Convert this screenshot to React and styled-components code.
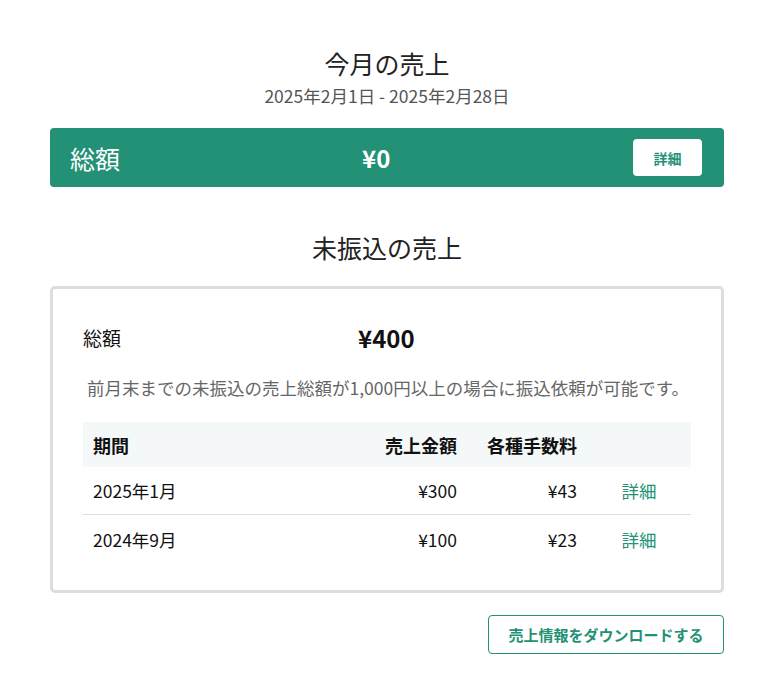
import React from "react";
import styled, { createGlobalStyle } from "styled-components";

const GlobalStyle = createGlobalStyle`
  html, body {
    margin: 0;
    padding: 0;
    background: #ffffff;
  }
  body {
    font-family: "Noto Sans CJK JP", "Noto Sans", sans-serif;
    color: #222222;
  }
`;

const GREEN = "#239175";

const Page = styled.div`
  padding: 46px 44px 20px 50px;
  display: flex;
  flex-direction: column;
`;

const SectionTitle = styled.h2`
  margin: ${(p) => p.$mt || 0}px 0 0;
  text-align: center;
  font-size: 25px;
  line-height: 34px;
  font-weight: 400;
  color: #222222;
`;

const Period = styled.div`
  margin-top: 4px;
  text-align: center;
  font-size: 17.5px;
  line-height: 24px;
  color: #555555;
`;

const TotalBar = styled.div`
  margin-top: 20px;
  height: 59px;
  box-sizing: border-box;
  background: ${GREEN};
  border-radius: 4px;
  display: flex;
  align-items: center;
  padding: 0 22px 0 20px;
  color: #ffffff;
`;

const SumLabel = styled.div`
  width: ${(p) => p.$w}px;
  flex: none;
  font-size: ${(p) => p.$size}px;
  line-height: 34px;
`;

const SumValue = styled.div`
  flex: 1;
  font-size: 24px;
  line-height: 34px;
  font-weight: 700;
`;

const WhiteButton = styled.button`
  width: 69px;
  height: 37px;
  border: none;
  border-radius: 4px;
  background: #ffffff;
  color: ${GREEN};
  font-family: inherit;
  font-size: 14px;
  font-weight: 700;
  cursor: pointer;
`;

const Card = styled.div`
  margin-top: 22px;
  border: 3px solid #dddddd;
  border-radius: 5px;
  padding: 32px 30px 27px;
  display: flex;
  flex-direction: column;
`;

const SumRow = styled.div`
  display: flex;
  align-items: center;
  color: #111111;
`;

const Note = styled.p`
  margin: 20px 0 0;
  padding-left: 4px;
  font-size: 17.5px;
  line-height: 26px;
  color: #666666;
`;

const Table = styled.div`
  margin-top: 21px;
  display: grid;
  grid-template-columns: 1fr 120px 120px 104px;
`;

const Cell = styled.div`
  height: ${(p) => (p.$head ? 45 : 48)}px;
  box-sizing: border-box;
  display: flex;
  align-items: center;
  justify-content: ${(p) =>
    p.$align === "right" ? "flex-end" : p.$align === "center" ? "center" : "flex-start"};
  padding: 0 10px;
  font-size: ${(p) => (p.$head ? 18 : 17.5)}px;
  font-weight: ${(p) => (p.$head ? 700 : 400)};
  color: ${(p) => (p.$link ? GREEN : "#111111")};
  background: ${(p) => (p.$head ? "#f5f8f8" : "transparent")};
  border-bottom: ${(p) => (p.$line ? "1px solid #dddddd" : "none")};
`;

const Actions = styled.div`
  margin-top: 22px;
  display: flex;
  justify-content: flex-end;
`;

const OutlineButton = styled.button`
  width: 236px;
  height: 39px;
  border: 1px solid ${GREEN};
  border-radius: 4px;
  background: #ffffff;
  color: ${GREEN};
  font-family: inherit;
  font-size: 15px;
  font-weight: 700;
  cursor: pointer;
`;

const rows = [
  { period: "2025年1月", sales: "¥300", fee: "¥43" },
  { period: "2024年9月", sales: "¥100", fee: "¥23" },
];

export default function App() {
  return (
    <>
      <GlobalStyle />
      <Page>
        <SectionTitle>今月の売上</SectionTitle>
        <Period>2025年2月1日 - 2025年2月28日</Period>
        <TotalBar>
          <SumLabel $w={292} $size={25}>総額</SumLabel>
          <SumValue>¥0</SumValue>
          <WhiteButton>詳細</WhiteButton>
        </TotalBar>

        <SectionTitle $mt={43}>未振込の売上</SectionTitle>
        <Card>
          <SumRow>
            <SumLabel $w={275} $size={19}>総額</SumLabel>
            <SumValue>¥400</SumValue>
          </SumRow>
          <Note>前月末までの未振込の売上総額が1,000円以上の場合に振込依頼が可能です。</Note>
          <Table>
            <Cell $head>期間</Cell>
            <Cell $head $align="right">売上金額</Cell>
            <Cell $head $align="right">各種手数料</Cell>
            <Cell $head />
            {rows.map((r, i) => {
              const line = i < rows.length - 1;
              return (
                <React.Fragment key={r.period}>
                  <Cell $line={line}>{r.period}</Cell>
                  <Cell $line={line} $align="right">{r.sales}</Cell>
                  <Cell $line={line} $align="right">{r.fee}</Cell>
                  <Cell $line={line} $align="center" $link>詳細</Cell>
                </React.Fragment>
              );
            })}
          </Table>
        </Card>
        <Actions>
          <OutlineButton>売上情報をダウンロードする</OutlineButton>
        </Actions>
      </Page>
    </>
  );
}
